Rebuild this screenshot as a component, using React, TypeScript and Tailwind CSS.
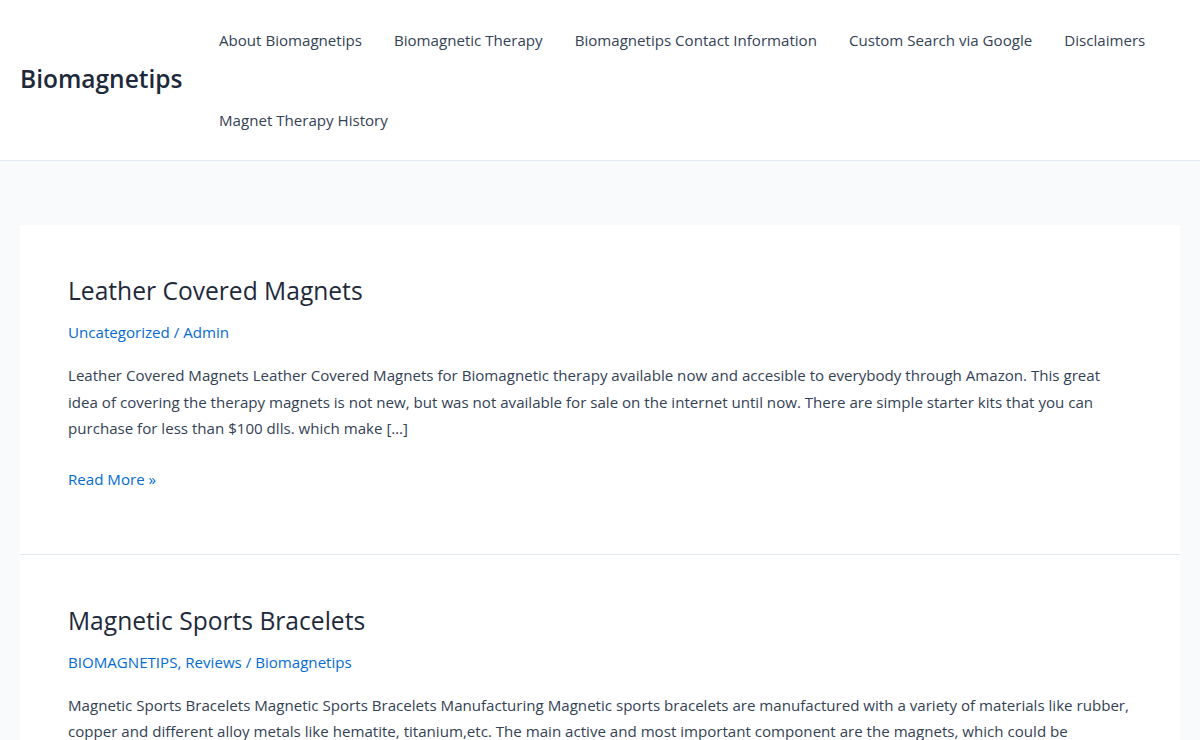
import React from 'react';

const NAV = [
  'About Biomagnetips',
  'Biomagnetic Therapy',
  'Biomagnetips Contact Information',
  'Custom Search via Google',
  'Disclaimers',
  'Magnet Therapy History',
];

const POSTS = [
  {
    title: 'Leather Covered Magnets',
    meta: [['Uncategorized'], ['Admin']],
    excerpt:
      'Leather Covered Magnets Leather Covered Magnets for Biomagnetic therapy available now and accesible to everybody through Amazon. This great idea of covering the therapy magnets is not new, but was not available for sale on the internet until now. There are simple starter kits that you can purchase for less than $100 dlls. which make […]',
  },
  {
    title: 'Magnetic Sports Bracelets',
    meta: [['BIOMAGNETIPS', 'Reviews'], ['Biomagnetips']],
    excerpt:
      'Magnetic Sports Bracelets Magnetic Sports Bracelets Manufacturing Magnetic sports bracelets are manufactured with a variety of materials like rubber, copper and different alloy metals like hematite, titanium,etc. The main active and most important component are the magnets, which could be neodymium or ferrite magnets, and they are usually placed inside the bracelet […]',
  },
];

function Header() {
  return (
    <header className="bg-white border-b border-[#e2e8f0] px-5 flex items-center h-[161px]">
      <div className="w-[183px] shrink-0">
        <a className="text-[24.5px] font-semibold text-[#1e293b] leading-none">Biomagnetips</a>
      </div>
      <nav className="flex-1 flex flex-wrap">
        {NAV.map((n) => (
          <a key={n} className="px-4 h-20 flex items-center text-[15.1px] text-[#334155]">
            {n}
          </a>
        ))}
      </nav>
    </header>
  );
}

function Post({ post }: { post: (typeof POSTS)[number] }) {
  return (
    <article className="bg-white px-12 pt-[48px] pb-[62px] border-b border-[#e2e8f0] last:border-b-0">
      <h2 className="text-[24.6px] leading-[36px] text-[#1e293b]">{post.title}</h2>
      <div className="mt-[11px] text-[15.1px] leading-[24px] text-[#046bd2]">
        {post.meta[0].map((m, i) => (
          <span key={m}>
            {i > 0 && ', '}
            <a>{m}</a>
          </span>
        ))}
        <span> / </span>
        <a>{post.meta[1][0]}</a>
      </div>
      <p className="mt-[18px] text-[15.1px] leading-[26.5px] text-[#334155]">{post.excerpt}</p>
      <p className="mt-[24px] text-[15.1px] leading-[26px] text-[#046bd2]">
        <a>Read More »</a>
      </p>
    </article>
  );
}

export default function App() {
  return (
    <div className="min-h-screen bg-[#f9fafb]" style={{ fontFamily: '"Open Sans", "Noto Sans", sans-serif' }}>
      <Header />
      <main className="px-5 pt-16 pb-16">
        {POSTS.map((p) => (
          <Post key={p.title} post={p} />
        ))}
      </main>
    </div>
  );
}
